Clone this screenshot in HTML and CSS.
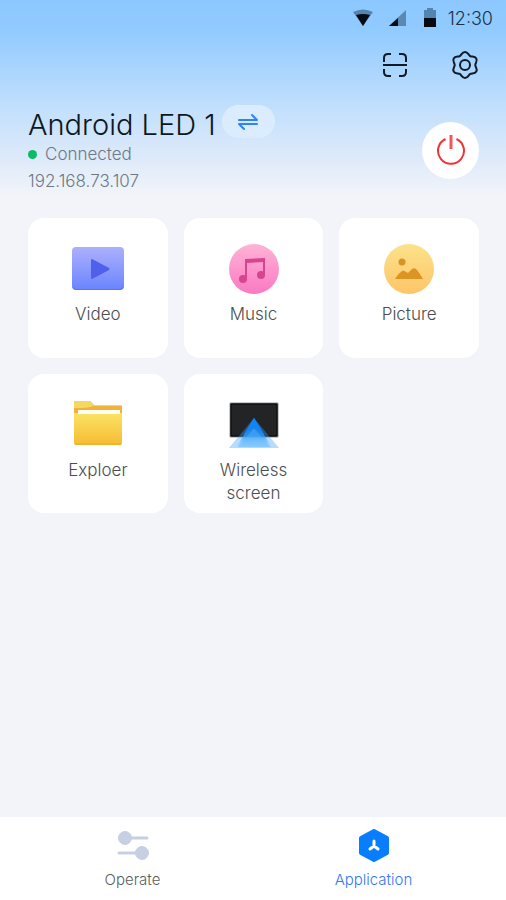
FILE: index.html
```html
<!DOCTYPE html>
<html lang="en">
<head>
<meta charset="utf-8">
<meta name="viewport" content="width=device-width, initial-scale=1">
<title>Android LED 1</title>
<link rel="stylesheet" href="styles.css">
</head>
<body>
<div class="status">
  <svg width="20" height="18" viewBox="0 0 20 18"><path d="M0 3Q10-2 20 3L10 17Z" fill="#5484b0"/><path d="M3 6Q10 4 17 6L10 17Z" fill="#050b12"/></svg>
  <svg class="signal" width="17" height="18" viewBox="0 0 17 18"><path d="M17 1V17H0Z" fill="#5c87b1"/><path d="M9 9V17H0Z" fill="#050b12"/></svg>
  <svg class="battery" width="12" height="20" viewBox="0 0 12 20"><path d="M0 2H3V0H9V2H12V10H0Z" fill="#5484b0"/><path d="M0 10H12V19H0Z" fill="#070a10"/></svg>
  <time>12:30</time>
</div>
<div class="toolbar">
  <button aria-label="Scan"><svg width="28" height="28" viewBox="0 0 28 28" fill="none" stroke="#101b28" stroke-width="2"><path d="M3 11V7Q3 3 7 3H10M18 3H21Q25 3 25 7V11M3 18V21Q3 25 7 25H10M18 25H21Q25 25 25 21V18M2 14H26"/></svg></button>
  <button aria-label="Settings"><svg width="28" height="28" viewBox="0 0 28 28" fill="none" stroke="#101b28" stroke-width="2" stroke-linejoin="round"><path d="M14 1C17 1 17.500 4.100 19.200 5.100C20.900 6.100 23.800 4.900 25.300 7.500C26.800 10.100 24.300 12 24.300 14C24.300 16 26.800 17.900 25.300 20.500C23.800 23.100 20.900 21.900 19.200 22.900C17.500 23.900 17 27 14 27C11 27 10.500 23.900 8.800 22.900C7.100 21.900 4.200 23.100 2.700 20.500C1.200 17.900 3.700 16 3.700 14C3.700 12 1.200 10.100 2.700 7.500C4.200 4.900 7.100 6.100 8.800 5.100C10.500 4.100 11 1 14 1Z"/><circle cx="14" cy="14" r="5"/></svg></button>
</div>
<header class="device">
  <div>
    <div class="title"><h1>Android LED 1</h1><button class="swap" aria-label="Switch device"><svg width="22" height="18" viewBox="0 0 22 18" fill="none" stroke="#2d83fb" stroke-width="2" stroke-linecap="round" stroke-linejoin="round"><path d="M2 7H20L15 2M20 11H2L7 16"/></svg></button></div>
    <p class="state">Connected</p>
    <p>192.168.73.107</p>
  </div>
  <button class="power" aria-label="Power"><svg width="30" height="32" viewBox="0 0 30 32" fill="none" stroke="#ed3438" stroke-width="2"><path d="M9.500 5A13 13 0 1 0 20.500 5"/><path d="M15 1V15" stroke-width="3" stroke="#f05558"/></svg></button>
</header>
<main>
  <button class="card"><svg width="54" height="54" viewBox="0 0 54 54"><defs><linearGradient id="v" x2="0" y2="1"><stop stop-color="#acb0fc"/><stop offset="1" stop-color="#6a84ff"/></linearGradient></defs><rect x="1" y="5" width="52" height="43" rx="4" fill="url(#v)"/><path d="M2 45Q3 47.500 5 47.500H49Q51 47.500 52 45" fill="none" stroke="#5d70f4"/><path d="M21 17L38 26Q39 27 38 28L21 37Q20 37 20 36V18Q20 17 21 17Z" fill="#4f60ea"/></svg><span>Video</span></button>
  <button class="card"><svg width="54" height="54" viewBox="0 0 54 54"><defs><linearGradient id="m" x2="0" y2="1"><stop stop-color="#ffb3d5"/><stop offset="1" stop-color="#fb79c4"/></linearGradient></defs><circle cx="27" cy="27" r="25" fill="url(#m)"/><g fill="#d54691"><path d="M18 17L38 16V33H36V20L20 21V36H18Z"/><circle cx="16" cy="37" r="4"/><circle cx="34" cy="33" r="4"/></g></svg><span>Music</span></button>
  <button class="card"><svg width="54" height="54" viewBox="0 0 54 54"><defs><linearGradient id="p" x2="0" y2="1"><stop stop-color="#fce28a"/><stop offset="1" stop-color="#fdc568"/></linearGradient></defs><circle cx="27" cy="27" r="25" fill="url(#p)"/><circle cx="20" cy="20" r="3.500" fill="#d89325"/><path d="M13 37Q16 32 20 29Q22 28 24 30L26 31L30 27Q33 25 35 28Q38 32 41 37Z" fill="#dc9423"/></svg><span>Picture</span></button>
  <button class="card"><svg width="54" height="54" viewBox="0 0 54 54"><defs><linearGradient id="f" x2="0" y2="1"><stop stop-color="#fbe366"/><stop offset="1" stop-color="#f5bc32"/></linearGradient></defs><path d="M3 4Q3 3 5 3H18Q20 3 21 5L23 7H49Q51 7 51 9V28H3Z" fill="#f0b23b"/><path d="M3 4Q3 3 5 3H18Q20 3 21 5L23 7H49L51 8H22Q18 10 3 10Z" fill="#f6d760"/><path d="M7 12H49V18H7Z" fill="#fffef2"/><path d="M3 15H6L7 16H48L49 15H51V45Q51 47 49 47H5Q3 47 3 45Z" fill="url(#f)"/><path d="M4 46H50" stroke="#e9ac2d"/></svg><span>Exploer</span></button>
  <button class="card"><svg width="54" height="54" viewBox="0 0 54 54"><defs><linearGradient id="w" x2="0" y2="1"><stop stop-color="#0878f0"/><stop offset=".55" stop-color="#2497fc"/><stop offset="1" stop-color="#a9dcff" stop-opacity=".5"/></linearGradient></defs><path d="M3 5H51V39H3Z" fill="#242628" stroke="#929596"/><path d="M4 6H50V38H4Z" fill="#222425" stroke="#050606"/><path d="M27 20L52 50H2Z" fill="#3ca4fa" opacity=".38"/><path d="M27 20L45 50H9Z" fill="url(#w)" opacity=".85"/><path d="M27 30L43 49H11Z" fill="#56b5ff" opacity=".42"/><path d="M27 20L37 36L27 30L17 36Z" fill="#1184f7"/></svg><span>Wireless screen</span></button>
</main>
<nav>
  <a href="#operate"><svg width="32" height="34" viewBox="0 0 32 34" fill="#c7cfe3" stroke="#c7cfe3"><path d="M8 10H30M2 25H25" fill="none" stroke-width="3" stroke-linecap="round"/><circle cx="8" cy="10" r="6.500"/><circle cx="25" cy="25" r="6.500"/></svg>Operate</a>
  <a class="active" href="#application" aria-current="page"><svg width="32" height="34" viewBox="0 0 32 34"><path d="M16 3L29 10V25L16 32L3 25V10Z" fill="#087eff" stroke="#087eff" stroke-width="4" stroke-linejoin="round"/><path d="M16 13V18L12 21M16 18L20 21" fill="none" stroke="#fff" stroke-width="3" stroke-linecap="round" stroke-linejoin="round"/></svg>Application</a>
</nav>
</body>
</html>
```
FILE: styles.css
```css
* { box-sizing: border-box; }
body {
  margin: 0;
  min-height: 100vh;
  display: flex;
  flex-direction: column;
  background: linear-gradient(#8cc8ff 0, #90caff 28px, #c0dffd 105px, #dce9fa 155px, #f2f4f9 196px);
  background-color: #f2f4f9;
  background-repeat: no-repeat;
  color: #4b4d50;
  font-family: Inter, "Liberation Sans", sans-serif;
  font-weight: 300;
  font-size: 17px;
}
svg { display: block; flex: none; }
h1, p { margin: 0; font-weight: 300; }
button { padding: 0; border: 0; background: none; color: inherit; font: inherit; cursor: pointer; }
.status {
  height: 36px;
  padding-right: 13px;
  display: flex;
  align-items: center;
  justify-content: flex-end;
  color: #1c3045;
  font-size: 18px;
}
.signal { margin-left: 16px; }
.battery { margin: 0 12px 0 18px; }
.toolbar {
  height: 58px;
  padding: 0 27px;
  display: flex;
  align-items: center;
  justify-content: flex-end;
  gap: 42px;
}
.device {
  padding: 11px 27px 0 28px;
  display: flex;
  align-items: center;
  justify-content: space-between;
  color: #6d7885;
  line-height: 27px;
}
.title { display: flex; align-items: center; gap: 6px; margin-bottom: 3px; }
h1 { color: #0c1722; font-size: 29px; line-height: 40px; height: 33px; }
.swap {
  width: 53px;
  height: 33px;
  border-radius: 17px;
  background: #dcecff;
  display: grid;
  place-items: center;
}
.state { display: flex; align-items: center; gap: 8px; }
.state::before { content: ""; width: 9px; height: 9px; border-radius: 50%; background: #0abb67; }
.power {
  width: 57px;
  height: 57px;
  border-radius: 50%;
  background: #fff;
  display: grid;
  place-items: center;
}
main {
  flex: 1;
  padding: 23px 27px 23px 28px;
  display: grid;
  grid-template-columns: repeat(3, 1fr);
  gap: 16px;
  align-content: start;
}
.card {
  aspect-ratio: 1;
  padding: 24px 20px 0;
  border-radius: 16px;
  background: #fff;
  display: flex;
  flex-direction: column;
  align-items: center;
  gap: 7px;
  line-height: 23px;
}
nav {
  height: 83px;
  background: #fff;
  display: grid;
  grid-template-columns: 1fr 1fr;
  padding: 0 12px;
}
nav a {
  display: flex;
  flex-direction: column;
  align-items: center;
  padding-top: 11px;
  gap: 7px;
  color: #5b5d60;
  font-size: 15px;
  line-height: 22px;
  text-decoration: none;
}
nav .active { color: #3478f6; }
```
